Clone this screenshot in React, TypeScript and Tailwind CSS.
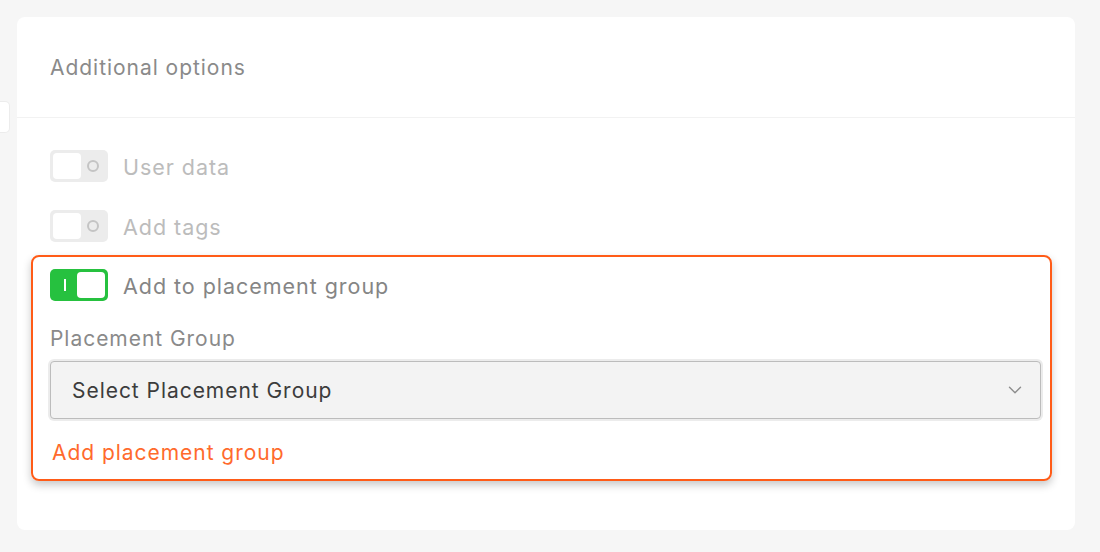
import { ChevronDown } from 'lucide-react'

function Toggle({ on, disabled }: { on?: boolean; disabled?: boolean }) {
  if (on) {
    return (
      <div className="relative flex h-[32px] w-[58px] shrink-0 items-center rounded-[5px] bg-[#26c13f] p-[3px]">
        <div className="flex flex-1 items-center justify-center">
          <div className="h-[12px] w-[2px] bg-white" />
        </div>
        <div className="h-[26px] w-[28px] rounded-[4px] bg-white" />
      </div>
    )
  }
  return (
    <div
      className={`flex h-[32px] w-[58px] shrink-0 items-center rounded-[5px] p-[3px] ${
        disabled ? 'bg-[#ececec]' : 'bg-[#dcdcdc]'
      }`}
    >
      <div className="h-[26px] w-[28px] rounded-[4px] bg-white" />
      <div className="flex flex-1 items-center justify-center">
        <div className="h-[12px] w-[12px] rounded-full border-2 border-[#c4c4c4]" />
      </div>
    </div>
  )
}

export default function App() {
  return (
    <main
      className="flex min-h-[552px] w-full bg-[#f6f6f6] tracking-[0.06em]"
      style={{ fontFamily: 'Inter, "Noto Sans", sans-serif' }}
    >
      <div className="mt-[101px] h-[32px] w-[10px] shrink-0 rounded-r-[5px] border border-l-0 border-[#ececec] bg-white" />

      <div className="ml-[7px] mt-[17px] h-[513px] w-[1058px] rounded-[8px] bg-white">
        <div className="flex h-[101px] items-center border-b border-[#f2f2f2] px-[33px] pt-[2px]">
          <h2 className="text-[21px] text-[#8a8a8a]">Additional options</h2>
        </div>

        <div className="pl-[33px] pr-[34px] pt-[32px]">
          <div className="flex h-[32px] items-center gap-[15px]">
            <Toggle disabled />
            <span className="pt-[2px] text-[21.5px] text-[#bcbcbc]">User data</span>
          </div>
          <div className="mt-[28px] flex h-[32px] items-center gap-[15px]">
            <Toggle disabled />
            <span className="pt-[2px] text-[21.5px] text-[#bcbcbc]">Add tags</span>
          </div>

          <div className="-ml-[19px] -mr-[11px] mt-[13px] rounded-[8px] border-2 border-[#ff5b17] pb-[14px] pl-[17px] pr-[9px] pt-[12px] shadow-[0_4px_8px_rgba(0,0,0,0.22)]">
            <div className="flex h-[32px] items-center gap-[15px]">
              <Toggle on />
              <span className="pt-[2px] text-[21.5px] text-[#858585]">Add to placement group</span>
            </div>

            <div className="mt-[26px] h-[24px] text-[21px] leading-[24px] text-[#8a8a8a]">
              Placement Group
            </div>

            <div className="mt-[10px] flex h-[58px] items-center justify-between rounded-[4px] border border-[#bcbcbc] bg-[#f3f3f3] pl-[21px] pr-[14px] shadow-[0_0_0_2px_#ececec]">
              <span className="pt-[2px] text-[21px] text-[#3c3c3c]">Select Placement Group</span>
              <ChevronDown className="h-[22px] w-[22px] text-[#8c8c8c]" strokeWidth={1.5} />
            </div>

            <div className="ml-[2px] mt-[22px] h-[24px] text-[21px] leading-[24px] text-[#ff6a2c]">
              Add placement group
            </div>
          </div>
        </div>
      </div>
    </main>
  )
}
